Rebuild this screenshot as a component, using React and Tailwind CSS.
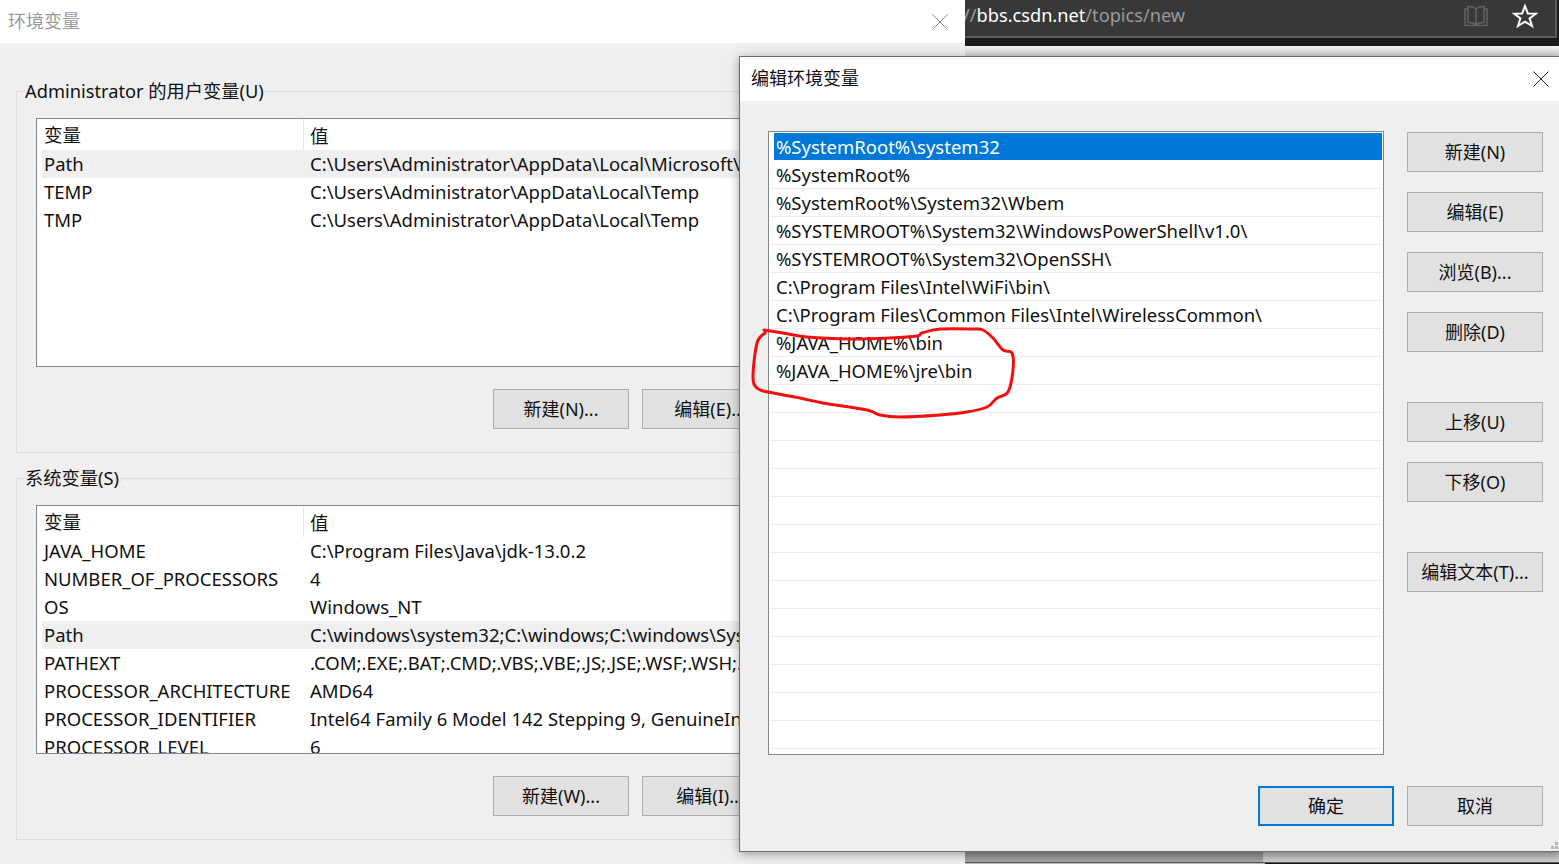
const FONT = "font-['Noto_Sans','Noto_Sans_CJK_SC',sans-serif]";

const userVars = [
  ["Path", "C:\\Users\\Administrator\\AppData\\Local\\Microsoft\\WindowsApps;", true],
  ["TEMP", "C:\\Users\\Administrator\\AppData\\Local\\Temp"],
  ["TMP", "C:\\Users\\Administrator\\AppData\\Local\\Temp"],
];

const sysVars = [
  ["JAVA_HOME", "C:\\Program Files\\Java\\jdk-13.0.2"],
  ["NUMBER_OF_PROCESSORS", "4"],
  ["OS", "Windows_NT"],
  ["Path", "C:\\windows\\system32;C:\\windows;C:\\windows\\System32\\Wbem;", true],
  ["PATHEXT", ".COM;.EXE;.BAT;.CMD;.VBS;.VBE;.JS;.JSE;.WSF;.WSH;.MSC"],
  ["PROCESSOR_ARCHITECTURE", "AMD64"],
  ["PROCESSOR_IDENTIFIER", "Intel64 Family 6 Model 142 Stepping 9, GenuineIntel"],
  ["PROCESSOR_LEVEL", "6"],
];

const pathEntries = [
  "%SystemRoot%\\system32",
  "%SystemRoot%",
  "%SystemRoot%\\System32\\Wbem",
  "%SYSTEMROOT%\\System32\\WindowsPowerShell\\v1.0\\",
  "%SYSTEMROOT%\\System32\\OpenSSH\\",
  "C:\\Program Files\\Intel\\WiFi\\bin\\",
  "C:\\Program Files\\Common Files\\Intel\\WirelessCommon\\",
  "%JAVA_HOME%\\bin",
  "%JAVA_HOME%\\jre\\bin",
  "", "", "", "", "", "", "", "", "", "", "", "", "",
];

// hand-drawn marker loop, points traced off the reference
const loop = [
  [764, 330], [783, 333], [807, 337], [850, 339], [890, 338], [917, 336], [922, 333], [940, 329],
  [973, 329], [983, 330], [993, 338], [1003, 350], [1012, 353], [1013, 370], [1008, 392], [997, 398],
  [987, 407], [967, 412], [940, 415], [900, 417], [880, 415], [867, 410], [823, 403], [800, 398],
  [768, 392], [757, 388], [753, 377], [757, 343], [765, 333],
];

function smooth(pts) {
  let d = `M${pts[0][0]} ${pts[0][1]}`;
  for (let i = 0; i < pts.length - 1; i++) {
    const p0 = pts[i - 1] || pts[i];
    const p1 = pts[i];
    const p2 = pts[i + 1];
    const p3 = pts[i + 2] || p2;
    const c1 = [p1[0] + (p2[0] - p0[0]) / 6, p1[1] + (p2[1] - p0[1]) / 6];
    const c2 = [p2[0] - (p3[0] - p1[0]) / 6, p2[1] - (p3[1] - p1[1]) / 6];
    d += ` C${c1[0]} ${c1[1]} ${c2[0]} ${c2[1]} ${p2[0]} ${p2[1]}`;
  }
  return d;
}

function Btn({ children, primary }) {
  return (
    <button
      className={`flex h-10 w-[136px] shrink-0 items-center justify-center bg-[#e1e1e1] text-[18px] text-[#111] ${
        primary ? "border-2 border-[#0078d7]" : "border border-[#adadad]"
      }`}
    >
      {children}
    </button>
  );
}

function CloseX({ className }) {
  return (
    <svg width="16" height="16" viewBox="0 0 16 16" className={className}>
      <path d="M0.5 0.5 L15.5 15.5 M15.5 0.5 L0.5 15.5" stroke="currentColor" strokeWidth="1" fill="none" />
    </svg>
  );
}

function VarTable({ rows }) {
  return (
    <div className="ml-[19px] h-[249px] w-[892px] overflow-hidden border border-[#828790] bg-white text-[18.5px] leading-[28px] text-[#111]">
      <div className="flex h-[31px] items-center">
        <div className="h-full w-[267px] border-r border-[#e5e5e5] pl-[7px] pt-[2px]">变量</div>
        <div className="pl-[6px] pt-[2px]">值</div>
      </div>
      {rows.map(([name, value, hover]) => (
        <div key={name} className={`ml-[5px] flex h-[28px] whitespace-nowrap ${hover ? "bg-[#efefef]" : ""}`}>
          <div className="w-[268px] shrink-0 pl-[2px]">{name}</div>
          <div>{value}</div>
        </div>
      ))}
    </div>
  );
}

function Group({ title, rows, buttons }) {
  return (
    <div className="relative ml-[16px] h-[362px] w-[932px] border border-[#dcdcdc] pt-[26px]">
      <span className="absolute -top-[14px] left-[7px] bg-[#efefef] px-[1px] text-[18.25px] leading-[26px] text-[#111]">
        {title}
      </span>
      <VarTable rows={rows} />
      <div className="mt-[22px] ml-[476px] flex gap-[13px]">
        {buttons.map((b) => (
          <Btn key={b}>{b}</Btn>
        ))}
      </div>
    </div>
  );
}

function BackWindow() {
  return (
    <div className="absolute left-0 top-0 h-[864px] w-[965px] overflow-hidden bg-[#efefef]">
      <div className="flex h-[43px] items-center justify-between bg-white pl-[8px] pr-[17px] text-[18px] text-[#9a9a9a]">
        <span>环境变量</span>
        <CloseX className="text-[#8a8a8a]" />
      </div>
      <div className="flex flex-col gap-[25px] pt-[48px]">
        <Group title="Administrator 的用户变量(U)" rows={userVars} buttons={["新建(N)...", "编辑(E)...", "删除(D)"]} />
        <Group title="系统变量(S)" rows={sysVars} buttons={["新建(W)...", "编辑(I)...", "删除(L)"]} />
      </div>
    </div>
  );
}

function BrowserBehind() {
  return (
    <>
      <div className="absolute left-[965px] top-0 w-[594px] bg-[#1a1a1a]">
        <div className="flex h-[38px] w-[592px] items-center justify-between border-r-2 border-b-2 border-[#5c5c5c] bg-[#383838] pb-[4px] pr-[17px] text-[18.2px]">
          <span className="-ml-[2px] whitespace-nowrap text-[#9a9a9a]">
            //<span className="text-white">bbs.csdn.net</span>/topics/new
          </span>
          <div className="flex items-center gap-[24px]">
            <svg width="24" height="22" viewBox="0 0 24 22" fill="none" stroke="#626262" strokeWidth="1.6">
              <path d="M12 4 C10 2 7 1.5 4 1.5 V17.5 C7 17.5 10 18 12 19.5 C14 18 17 17.5 20 17.5 V1.5 C17 1.5 14 2 12 4 Z M12 4 V19.5 M4 4 H1 V20.5 H23 V4 H20" />
            </svg>
            <svg width="26" height="26" viewBox="0 0 26 26" fill="none" stroke="#fff" strokeWidth="2" strokeLinejoin="miter">
              <path d="M13 3 L15.8 10.4 L24 10.6 L17.6 15.4 L20 23 L13 18.6 L6 23 L8.4 15.4 L2 10.6 L10.2 10.4 Z" />
            </svg>
          </div>
        </div>
        <div className="h-[8px]" />
        <div className="h-[10px] bg-gradient-to-b from-[#f4f4f4] to-[#cfcfcf]" />
      </div>
      <div className="absolute left-[965px] top-[852px] h-[12px] w-[594px]">
        <div className="flex h-[10px]">
          <div className="w-[298px] bg-gradient-to-b from-[#8a8a8a] to-[#a8a8a8]" />
          <div className="flex-1 bg-gradient-to-b from-[#b4b4b4] to-[#d0d0d0]" />
        </div>
        <div className="h-[1px] bg-[#555]" />
        <div className="flex h-[1px]">
          <div className="w-[300px] bg-[#bdbdbd]" />
          <div className="flex-1 bg-[#1c1a16]" />
        </div>
      </div>
    </>
  );
}

function EditWindow() {
  return (
    <div className="absolute left-[739px] top-[56px] flex h-[796px] w-[820px] flex-col border-t border-l border-b border-[#6d6d6d] bg-[#efefef] shadow-[0_2px_10px_rgba(0,0,0,0.35)]">
      <div className="flex h-[44px] shrink-0 items-center justify-between bg-white pb-[2px] pl-[11px] pr-[10px] text-[18px] text-[#111]">
        <span>编辑环境变量</span>
        <CloseX className="mt-[2px] text-[#222]" />
      </div>
      <div className="flex pl-[28px] pt-[30px]">
        <div className="h-[624px] w-[616px] overflow-hidden border border-[#828790] bg-white pl-[1px] pt-[1px] text-[18.5px] leading-[27px] text-[#111]">
          {pathEntries.map((entry, i) => (
            <div
              key={i}
              className={`mr-[1px] h-[28px] whitespace-nowrap ${
                i === 0 ? "ml-[4px] border-b border-white bg-[#0078d7] pl-[2px] text-white" : "border-b border-[#ededed] pl-[6px]"
              }`}
            >
              {entry}
            </div>
          ))}
        </div>
        <div className="ml-[23px] mt-[1px] flex flex-col">
          <Btn>新建(N)</Btn>
          <div className="mt-[20px]"><Btn>编辑(E)</Btn></div>
          <div className="mt-[20px]"><Btn>浏览(B)...</Btn></div>
          <div className="mt-[20px]"><Btn>删除(D)</Btn></div>
          <div className="mt-[50px]"><Btn>上移(U)</Btn></div>
          <div className="mt-[20px]"><Btn>下移(O)</Btn></div>
          <div className="mt-[50px]"><Btn>编辑文本(T)...</Btn></div>
        </div>
      </div>
      <div className="mt-[31px] flex justify-end gap-[13px] pr-[16px]">
        <Btn primary>确定</Btn>
        <Btn>取消</Btn>
      </div>
      {/* resize grip */}
      <svg className="absolute bottom-[2px] right-[1px]" width="7" height="7" fill="#b5b5b5">
        <rect x="4" y="0" width="3" height="3" />
        <rect x="0" y="4" width="3" height="3" />
        <rect x="4" y="4" width="3" height="3" />
      </svg>
    </div>
  );
}

export default function App() {
  return (
    <div className={`relative h-[864px] w-[1559px] overflow-hidden bg-white ${FONT}`}>
      <BrowserBehind />
      <BackWindow />
      <EditWindow />
      {/* red marker circle scribbled over the screenshot */}
      <svg className="pointer-events-none absolute left-0 top-0" width="1559" height="864" fill="none">
        <path d={smooth(loop)} stroke="#f01010" strokeWidth="3" strokeLinejoin="round" strokeLinecap="round" />
      </svg>
    </div>
  );
}
